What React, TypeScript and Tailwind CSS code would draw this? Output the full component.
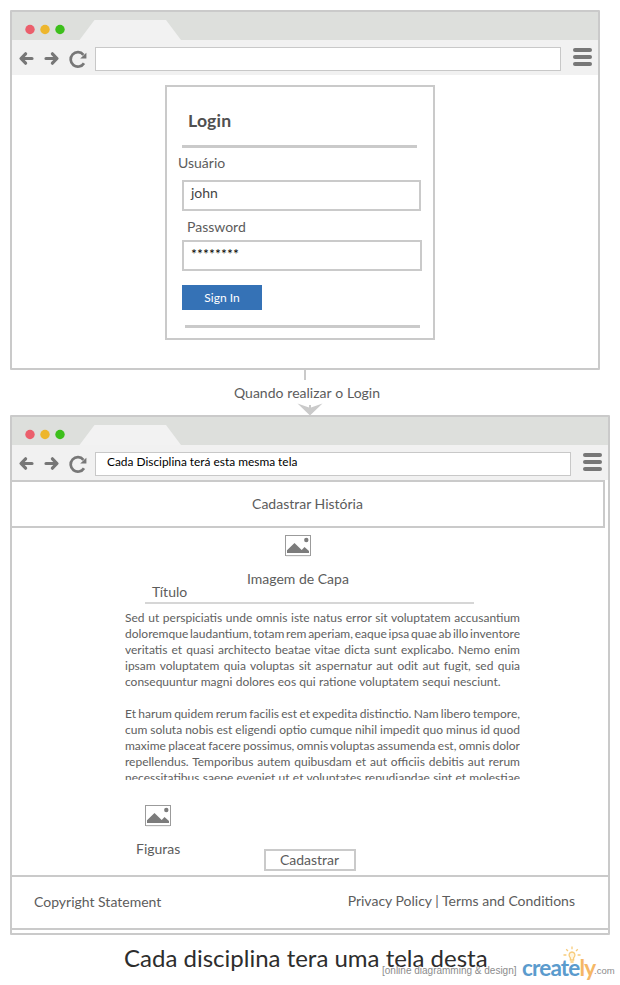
import type { ReactNode } from 'react';

function NavIcons() {
  return (
    <svg className="h-[35px] w-[83px] shrink-0" viewBox="12 40 83 35" fill="none" stroke="#777777">
      <g strokeWidth="3.2" strokeLinecap="round" strokeLinejoin="round">
        <path d="M25.6 53.8 21 58.5 25.6 63.2M21.6 58.5H32" />
        <path d="M52.4 53.8 57 58.5 52.4 63.2M56.4 58.5H46" />
      </g>
      <path d="M83.4 54.8A7.2 7.2 0 1 0 84 63.2" strokeWidth="2.7" />
      <path d="M86.4 52.8V58.6H80.2L82.4 56.4 84.4 54.4Z" fill="#777777" stroke="none" />
    </svg>
  );
}

function BrowserWindow({ className, url, children }: { className: string; url?: string; children: ReactNode }) {
  return (
    <section className={`flex shrink-0 flex-col rounded-[1px] border-2 border-[#cacaca] bg-white ${className}`}>
      <div className="h-7 shrink-0 bg-[#dddfdc]">
        <svg className="h-7 w-[180px]" viewBox="12 12 180 28">
          <circle cx="30" cy="29.5" r="4.7" fill="#eb5f6c" />
          <circle cx="45" cy="29.5" r="4.7" fill="#edb62d" />
          <circle cx="60" cy="29.5" r="4.7" fill="#3cbf1b" />
          <path d="M79.5 40 94.5 20H166L181 40Z" fill="#f2f2f2" />
        </svg>
      </div>
      <div className="flex h-[35px] shrink-0 items-start bg-[#f1f1f1]">
        <NavIcons />
        <div className="mt-[7px] h-6 flex-1 border border-[#c8c8c8] bg-white pl-[11px] text-[11.9px] leading-[18px] text-black">
          {url}
        </div>
        <div className="mt-2 mr-[6px] ml-3 flex w-[19px] flex-col gap-[3px]">
          <i className="h-1 rounded-full bg-[#777777]" />
          <i className="h-1 rounded-full bg-[#777777]" />
          <i className="h-1 rounded-full bg-[#777777]" />
        </div>
      </div>
      {children}
    </section>
  );
}

function LoginCard() {
  return (
    <div className="mt-[10px] ml-[153px] flex h-[255px] w-[270px] flex-col border-2 border-[#cacaca]">
      <h1 className="mt-[22px] ml-[21px] text-[17.6px] leading-6 font-bold tracking-[0.2px] text-[#505050]">Login</h1>
      <hr className="mt-3 ml-[15px] h-[3px] w-[235px] border-0 bg-[#cacaca]" />
      <label className="mt-[5px] ml-[11px] h-5 text-[14px] leading-5">Usuário</label>
      <div className="mt-[7px] ml-[15px] h-[31px] w-[239px] border-2 border-[#cacaca] pl-[7px] text-[14px] leading-[22px] text-[#444]">
        john
      </div>
      <label className="mt-[6px] ml-5 h-5 text-[14px] leading-5">Password</label>
      <div className="mt-[3px] ml-[15px] h-[31px] w-[240px] border-2 border-[#cacaca] pl-[7px] text-[14.1px] leading-[23px] text-black">
        ********
      </div>
      <button className="mt-[14px] ml-[15px] h-[25px] w-20 bg-[#3572b6] text-[12px] leading-[25px] text-white">
        Sign In
      </button>
      <hr className="mt-[15px] ml-[18px] h-[3px] w-[235px] border-0 bg-[#cacaca]" />
    </div>
  );
}

function PictureIcon({ className }: { className: string }) {
  return (
    <svg className={`h-[22px] w-[26px] shrink-0 ${className}`} viewBox="0 0 26 22">
      <rect x=".5" y=".5" width="25" height="20" fill="#fff" stroke="#9b9b9b" />
      <path d="M1 20.7H25" stroke="#b5b5b5" />
      <path d="M2 18V15.3L9.5 8 16.7 15 19.5 12 24 16V18Z" fill="#7c7c7c" />
      <circle cx="21.3" cy="5" r="2.2" fill="#7c7c7c" />
    </svg>
  );
}

const firstParagraph = [
  'Sed ut perspiciatis unde omnis iste natus error sit voluptatem accusantium',
  'doloremque laudantium, totam rem aperiam, eaque ipsa quae ab illo inventore',
  'veritatis et quasi architecto beatae vitae dicta sunt explicabo. Nemo enim',
  'ipsam voluptatem quia voluptas sit aspernatur aut odit aut fugit, sed quia',
];
const secondParagraph = [
  'Et harum quidem rerum facilis est et expedita distinctio. Nam libero tempore,',
  'cum soluta nobis est eligendi optio cumque nihil impedit quo minus id quod',
  'maxime placeat facere possimus, omnis voluptas assumenda est, omnis dolor',
  'repellendus. Temporibus autem quibusdam et aut officiis debitis aut rerum',
  'necessitatibus saepe eveniet ut et voluptates repudiandae sint et molestiae',
];

function Line({ children }: { children: ReactNode }) {
  return <p className="text-justify [text-align-last:justify] [word-spacing:-2px] whitespace-nowrap">{children}</p>;
}

function Article() {
  return (
    <article className="mt-[6px] ml-[113px] h-[170px] w-[395px] shrink-0 overflow-hidden text-[12px] leading-4 text-[#606060]">
      {firstParagraph.map((line) => <Line key={line}>{line}</Line>)}
      <p className="mb-4 [word-spacing:0.2px]">consequuntur magni dolores eos qui ratione voluptatem sequi nesciunt.</p>
      {secondParagraph.map((line) => <Line key={line}>{line}</Line>)}
    </article>
  );
}

function Connector() {
  return (
    <div className="flex h-[45px] shrink-0 flex-col">
      <div className="ml-[304px] h-[10px] w-[2px] bg-[#cacaca]" />
      <p className="mt-[3px] ml-[234px] h-5 text-[14px] leading-5 whitespace-nowrap [word-spacing:0.3px]">Quando realizar o Login</p>
      <svg className="ml-[297px] h-3 w-[26px]" viewBox="0 0 26 12">
        <path d="M0.5 0.5 12 4.5V2H14V4.5L25.5 0.5 13 12.5Z" fill="#cacaca" />
      </svg>
    </div>
  );
}

function CreatelyMark() {
  return (
    <div className="absolute top-[944px] left-[382px] h-10 w-[238px] whitespace-nowrap">
      <div className="flex items-baseline font-['Liberation_Sans',sans-serif] text-[#8c8c8c]">
        <span className="relative -top-[1px] w-[140px] text-[10px]">[online diagramming &amp; design]</span>
        <span className="relative top-px w-[72px] font-['Lato',sans-serif] text-[22.5px] leading-[46px] font-bold tracking-[-0.85px] text-[#5b9bcd]">
          create<span className="text-[#f5b765]">ly</span>
        </span>
        <span className="relative -top-[1px] text-[9.5px]">.com</span>
      </div>
      <svg className="absolute top-[2px] left-[181px] h-[18px] w-[18px]" viewBox="0 0 18 18" fill="none" stroke="#f8cb79" strokeWidth="1.3">
        <path d="M9 0.5V3.2M3.2 3.2 5 5M14.8 3.2 13 5M0.5 9H3.4M14.6 9H17.5" />
        <path d="M7.4 14V12C5 9.8 6 6 9 6S13 9.8 10.6 12V14ZM7.4 16H10.6" fill="#fff5df" />
      </svg>
    </div>
  );
}

export default function App() {
  return (
    <main className="relative flex h-[985px] w-[620px] flex-col overflow-hidden bg-white pt-[10px] font-['Lato',sans-serif] text-[#5c5c5c]">
      <BrowserWindow className="ml-[10px] h-[360px] w-[590px]">
        <LoginCard />
      </BrowserWindow>
      <Connector />
      <BrowserWindow className="ml-[10px] h-[520px] w-[600px]" url="Cada Disciplina terá esta mesma tela">
        <header className="h-12 w-[593px] shrink-0 border-y-2 border-r-2 border-[#cacaca] text-center text-[14px] leading-[44px]">
          Cadastrar História
        </header>
        <PictureIcon className="mt-[7px] ml-[273px]" />
        <p className="mt-3 ml-[235px] h-5 shrink-0 text-[14px] leading-5">Imagem de Capa</p>
        <h2 className="-mt-[7px] ml-[133px] h-[22px] w-[329px] shrink-0 border-b-2 border-[#d6d6d6] pl-[7px] text-[14px] leading-5">Título</h2>
        <Article />
        <div className="mt-6 flex h-[71px] shrink-0">
          <figure className="mt-px ml-[124px] w-[128px]">
            <PictureIcon className="ml-[9px]" />
            <figcaption className="mt-3 text-[14px] leading-5">Figuras</figcaption>
          </figure>
          <button className="mt-[45px] h-[22px] w-[92px] border-2 border-[#cacaca] pr-px text-[14px] leading-[18px]">Cadastrar</button>
        </div>
        <footer className="flex h-[55px] shrink-0 justify-between border-y-2 border-[#cacaca] pr-[33px] pl-[22px] text-[14px] leading-5">
          <span className="mt-[15px]">Copyright Statement</span>
          <span className="mt-[14px]">Privacy Policy | Terms and Conditions</span>
        </footer>
      </BrowserWindow>
      <p className="mt-[7px] ml-[124px] text-[24px] leading-8 whitespace-nowrap text-[#2d2d2d]">Cada disciplina tera uma tela desta</p>
      <CreatelyMark />
    </main>
  );
}
